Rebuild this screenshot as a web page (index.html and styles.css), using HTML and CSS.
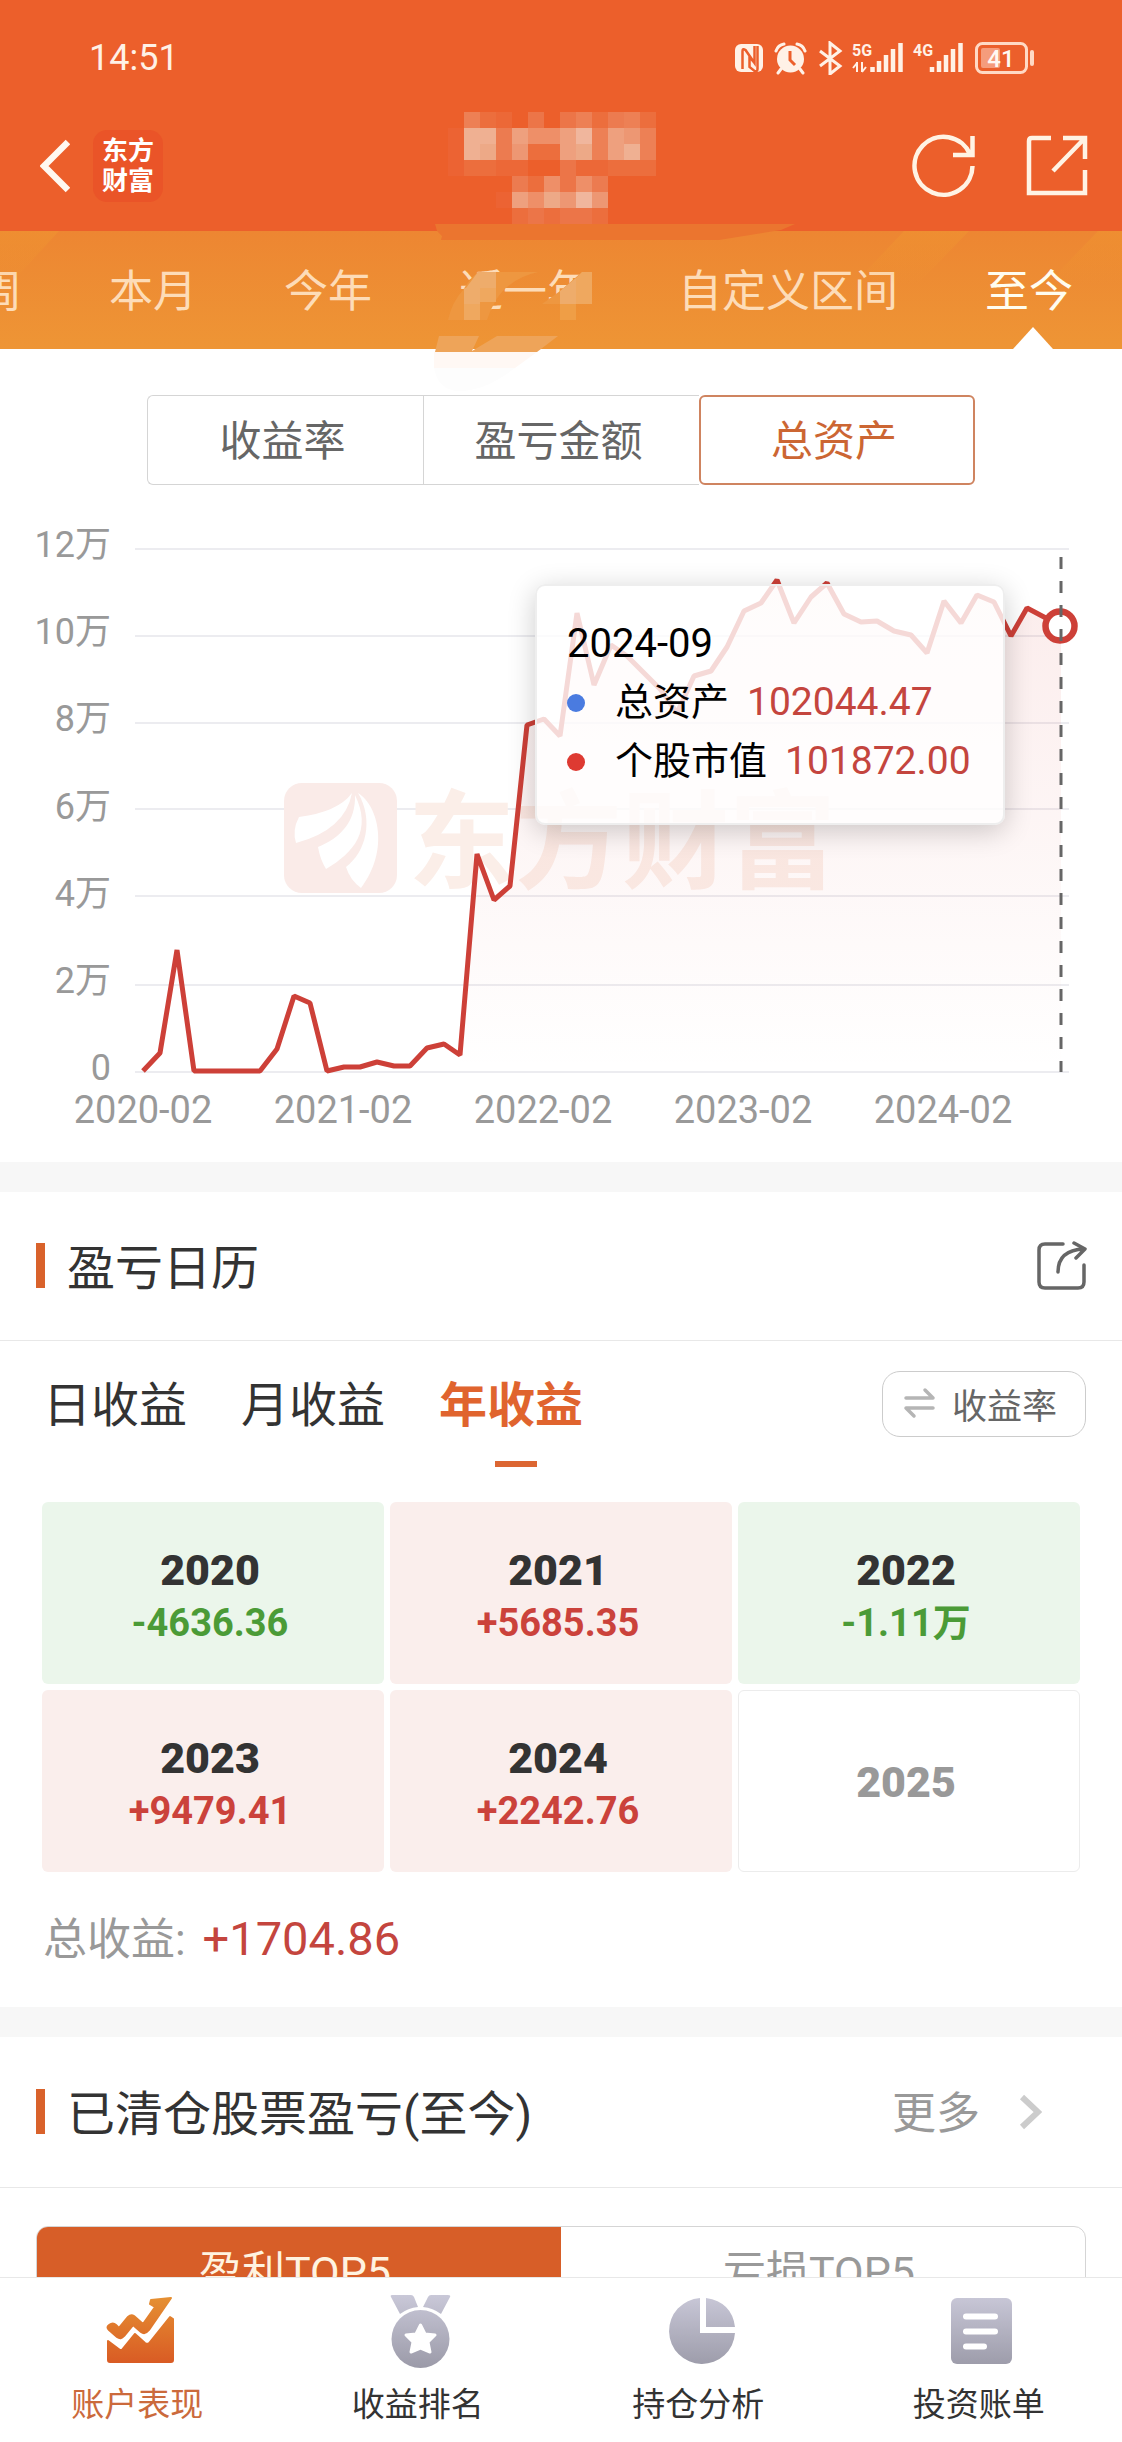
FILE: index.html
```html
<!DOCTYPE html>
<html lang="zh-CN">
<head>
<meta charset="utf-8">
<meta name="viewport" content="width=device-width, initial-scale=1">
<title>账户表现</title>
<link rel="stylesheet" href="styles.css">
</head>
<body>
<div class="app">
  <header class="top">
    <div class="status">
      <span class="clock">14:51</span>
      <svg class="status-icons" viewBox="735 41 300 34" aria-hidden="true">
        <rect x="735" y="44" width="28" height="28" rx="6" fill="#fff1e6"/>
        <path d="M742.500 69V51q0-3 3-1l9 13V46M754.500 63l-5-6v10l5 4q3 1 3-2V46" fill="none" stroke="#ec5f2b" stroke-width="2.500"/>
        <circle cx="790.500" cy="59" r="13.500" fill="#fff1e6"/>
        <path d="M776 51q2-6 8-7M805 51q-2-6-8-7M781 69l-3 4M800 69l3 4" stroke="#fff1e6" stroke-width="3" fill="none" stroke-linecap="round"/>
        <path d="M790 51v9l5 5" fill="none" stroke="#ec5f2b" stroke-width="3"/>
        <path d="M820 51l20 15-10 8V43l10 8-20 15" fill="none" stroke="#fff1e6" stroke-width="3"/>
        <text x="852" y="56" class="net">5G</text>
        <path d="M857 62v10M853 68l4-5M862 62v10M866 67l-4 5" stroke="#fff1e6" stroke-width="2" fill="none"/>
        <path d="M872.500 72v-5M879 72V61M886 72V55M893 72V49M900.500 72V43" stroke="#fff1e6" stroke-width="4.500"/>
        <text x="913" y="56" class="net">4G</text>
        <path d="M932 72v-5M939 72V61M946 72V55M953 72V49M960.500 72V43" stroke="#fff1e6" stroke-width="4.500"/>
        <rect x="976.500" y="43.500" width="50" height="29" rx="6" fill="none" stroke="#ffd9c4" stroke-width="3"/>
        <rect x="981" y="48" width="19" height="20" rx="2" fill="#f59c7c"/>
        <rect x="1030" y="50" width="4" height="16" rx="2" fill="#ffd9c4"/>
        <text x="1001" y="67" class="charge">41</text>
      </svg>
    </div>
    <div class="nav">
      <button class="icon-btn" aria-label="返回">
        <svg width="30" height="54" viewBox="40 139 30 54"><path d="M68 142L44 166l24 24" fill="none" stroke="#fff8f0" stroke-width="6.500"/></svg>
      </button>
      <a class="logo" href="#">东方<br>财富</a>
      <span class="spacer"></span>
      <button class="icon-btn refresh" aria-label="刷新">
        <svg width="64" height="64" viewBox="912 133 64 64"><path d="M972.500 165A29 29 0 1 1 970 153M972.500 135v19H953" fill="none" stroke="#fff3e4" stroke-width="4.500"/></svg>
      </button>
      <button class="icon-btn" aria-label="分享">
        <svg width="62" height="62" viewBox="1026 135 62 62"><path d="M1051 138h-19q-3 0-3 3v52h56v-23M1063 138h22v21M1084 139l-31 32" fill="none" stroke="#fff3e4" stroke-width="4.500"/></svg>
      </button>
    </div>
    <nav class="periods">
      <button>本周</button>
      <button>本月</button>
      <button>今年</button>
      <button>近一年</button>
      <button>自定义区间</button>
      <button class="on">至今</button>
    </nav>
    <svg class="mask" viewBox="0 0 1122 400" aria-hidden="true">
      <defs><linearGradient id="ray" x1="0" y1="0" x2="0" y2="1"><stop offset="0" stop-color="#f09a30" stop-opacity=".4"/><stop offset="1" stop-color="#f09a30" stop-opacity="0"/></linearGradient></defs>
      <path fill="url(#ray)" d="M0 231h59l-44 48H0zM904 231h65l-52 54h-64zM1098 231h24v54h-76z"/>
      <path fill="#ec6333" d="M448 128h16v48h-16zM496 192h16v16h-16z"/>
      <path fill="#ed8055" d="M464 112h16v16h-16zM576 112h16v16h-16zM624 112h16v16h-16zM592 128h16v32h-16zM640 128h16v32h-16z"/>
      <path fill="#ec6e3d" d="M480 112h16v16h-16zM640 112h16v16h-16zM592 112h16v16h-16zM528 144h32v16h-32zM464 160h32v16h-32zM608 160h48v16h-48zM528 176h16v16h-16zM512 208h16v16h-16zM544 208h16v16h-16zM592 208h16v16h-16z"/>
      <path fill="#ec6837" d="M496 112h16v16h-16zM496 160h32v16h-32zM576 160h32v16h-32z"/>
      <path fill="#ec7548" d="M528 112h16v16h-16zM560 112h16v16h-16zM560 160h16v16h-16zM560 176h16v16h-16zM528 208h16v16h-16zM560 208h32v16h-32z"/>
      <path fill="#ec7b50" d="M608 112h16v16h-16zM496 128h16v32h-16zM512 176h16v16h-16zM592 176h16v16h-16z"/>
      <path fill="#efb092" d="M464 128h32v16h-32zM464 144h16v16h-16zM624 144h16v16h-16z"/>
      <path fill="#eea07e" d="M512 128h16v16h-16zM560 128h16v32h-16zM608 128h16v32h-16zM512 192h16v16h-16z"/>
      <path fill="#ee8f68" d="M528 128h32v16h-32zM544 176h16v16h-16zM576 176h16v16h-16zM528 192h16v16h-16z"/>
      <path fill="#ed9773" d="M624 128h16v16h-16zM512 144h16v16h-16zM560 192h16v16h-16zM592 192h16v16h-16z"/>
      <path fill="#eda987" d="M480 144h16v16h-16zM576 144h16v16h-16zM544 192h16v16h-16z"/>
      <path fill="#f0b69d" d="M576 128h16v16h-16zM576 192h16v16h-16z"/>
      <path fill="#eb752f" d="M435 224h360l-14 6-62 10H441l1-4-5-5z"/>
      <path fill="#ee9740" d="M478 272h60q-28 6-42 28-6 10-9 20h-39q4-18 15-30 6-10 15-18zM582 272h10v32h-50l18-13z"/>
      <path fill="#eeac6b" d="M472 280l6-8h18v16h-30zM464 288h16v16h-16zM560 291l16-13v26h-16z"/>
      <path fill="#efa85f" d="M480 288h16v14h-16zM464 304h16v16h-16zM582 272h10v32h-16v-26z"/>
      <path fill="#ef9e46" d="M560 304h16v16h-16z"/>
      <path fill="#eea459" d="M439 336h40l-7 15 25-15h61l-21 16H435z"/>
      <path fill="#fff8f4" d="M434 352h103l-22 16h-81z"/>
      <path fill="#fdfdfd" d="M434 368h81q-30 23-55 23-22 0-26-23z"/>
    </svg>
  </header>

  <main class="content">
    <section class="assets">
      <div class="segment">
        <button>收益率</button>
        <button>盈亏金额</button>
        <button class="on">总资产</button>
      </div>
      <div class="chart">
        <svg viewBox="0 485 1122 677" role="img" aria-label="总资产走势">
          <defs>
            <linearGradient id="fill" x1="0" y1="0" x2="0" y2="1"><stop offset="0" stop-color="#d9403a" stop-opacity=".1"/><stop offset="1" stop-color="#d9403a" stop-opacity="0"/></linearGradient>
          </defs>
          <g stroke="#ececf0" stroke-width="2">
            <path d="M135 549h934M135 636h934M135 723h934M135 809h934M135 896h934M135 985h934M135 1072h934"/>
          </g>
          <g>
            <rect x="284" y="783" width="113" height="110" rx="18" fill="#faebe8"/>
            <path fill="#fff" d="M352 793Q338 812 299 817Q292 830 296 843Q345 830 352 793zM355 795C356 822 340 838 318 847Q320 859 326 869C355 852 372 830 355 795zM358 793C378 805 390 850 361 888Q350 880 346 867C366 852 374 820 358 793z"/>
            <text x="408" y="880" class="watermark">东方财富</text>
          </g>
          <path fill="url(#fill)" d="M460 1072L460 1055L477 854L494 900L510 886L527 725L544 719L560 736L577 613L594 685L611 645L627 656L644 673L661 690L677 713L694 676L711 671L727 647L744 611L761 603L777 580L794 623L811 597L827 583L844 614L861 622L877 621L894 631L911 635L927 653L944 601L961 623L977 595L994 602L1011 636L1027 608L1044 617L1061 626V1072z"/>
          <path fill="none" stroke="#cd4038" stroke-width="5" stroke-linejoin="bevel" d="M143 1071L160 1053L177 950L194 1071H260L277 1049L294 996L310 1003L327 1071L344 1067H360L377 1062L394 1066H410L427 1048L444 1044L460 1055L477 854L494 900L510 886L527 725L544 719L560 736L577 613L594 685L611 645L627 656L644 673L661 690L677 713L694 676L711 671L727 647L744 611L761 603L777 580L794 623L811 597L827 583L844 614L861 622L877 621L894 631L911 635L927 653L944 601L961 623L977 595L994 602L1011 636L1027 608L1044 617L1061 626"/>
          <circle cx="1060" cy="626" r="14.500" fill="#fff" stroke="#cd4038" stroke-width="6.500"/>
          <path d="M1061 557v515" stroke="#666" stroke-width="3" stroke-dasharray="12 12"/>
          <g class="axis" text-anchor="end">
            <text x="111" y="557">12万</text>
            <text x="111" y="644">10万</text>
            <text x="111" y="731">8万</text>
            <text x="111" y="819">6万</text>
            <text x="111" y="906">4万</text>
            <text x="111" y="993">2万</text>
            <text x="111" y="1080">0</text>
          </g>
          <g class="axis months" text-anchor="middle">
            <text x="143" y="1123">2020-02</text>
            <text x="343" y="1123">2021-02</text>
            <text x="543" y="1123">2022-02</text>
            <text x="743" y="1123">2023-02</text>
            <text x="943" y="1123">2024-02</text>
          </g>
        </svg>
        <div class="tip">
          <p class="tip-date">2024-09</p>
          <p class="tip-row"><i class="dot blue"></i><span>总资产</span><b>102044.47</b></p>
          <p class="tip-row"><i class="dot red"></i><span>个股市值</span><b>101872.00</b></p>
        </div>
      </div>
    </section>

    <section class="calendar">
      <div class="head">
        <h2>盈亏日历</h2>
        <button class="icon-btn" aria-label="分享日历">
          <svg width="50" height="50" viewBox="1037 1240 50 50"><path d="M1063 1243h-18q-6 0-6 6v32q0 6 6 6h33q6 0 6-6v-17M1058 1271q0-22 26-23M1074 1242l11 6-9 9" fill="none" stroke="#666" stroke-width="3.500" stroke-linecap="round" stroke-linejoin="round"/></svg>
        </button>
      </div>
      <div class="modes">
        <button>日收益</button>
        <button>月收益</button>
        <button class="on">年收益</button>
        <span class="spacer"></span>
        <button class="switch">
          <svg width="32" height="32" viewBox="902 1387 32 32"><path d="M904 1398h27l-8-8M931 1408h-27l8 8" fill="none" stroke="#b5b5b5" stroke-width="3.500" stroke-linecap="round" stroke-linejoin="round"/></svg><span>收益率</span>
        </button>
      </div>
      <ul class="years">
        <li class="down"><strong>2020</strong><span>-4636.36</span></li>
        <li class="up"><strong>2021</strong><span>+5685.35</span></li>
        <li class="down"><strong>2022</strong><span>-1.11万</span></li>
        <li class="up"><strong>2023</strong><span>+9479.41</span></li>
        <li class="up"><strong>2024</strong><span>+2242.76</span></li>
        <li class="none"><strong>2025</strong></li>
      </ul>
      <p class="total">总收益: <b>+1704.86</b></p>
    </section>

    <section class="closed">
      <div class="head">
        <h2>已清仓股票盈亏(至今)</h2>
        <a class="more" href="#"><span>更多</span>
          <svg width="24" height="36" viewBox="1018 2091 24 36"><path d="M1022 2094l16 15-16 15" fill="none" stroke="#ccc" stroke-width="6"/></svg>
        </a>
      </div>
      <div class="top5">
        <button class="on">盈利TOP5</button>
        <button>亏损TOP5</button>
      </div>
    </section>
  </main>

  <nav class="tabbar">
    <a class="on" href="#">
      <svg width="73" height="73" viewBox="104 2295 73 73" aria-hidden="true">
        <defs><linearGradient id="warm" gradientUnits="userSpaceOnUse" x1="0" y1="2298" x2="0" y2="2363"><stop offset="0" stop-color="#e58f32"/><stop offset="1" stop-color="#d95b24"/></linearGradient></defs>
        <path fill="url(#warm)" stroke="url(#warm)" stroke-width="2" stroke-linejoin="round" d="M109 2325q4-3 7 0l3 3 9-11q3-3 6-1l9 8 12-17-5-3 1-4 20-2-22 32q-4 5-8 2l-8-7-9 11q-3 4-7 1l-8-7q-3-3 0-5zM108 2341l12 9 2 0 13-16 10 9q3 2 5-1l20-25 3 2v41q0 2-2 2h-61q-2 0-2-2z"/>
      </svg>
      <span>账户表现</span>
    </a>
    <a href="#">
      <svg width="73" height="73" viewBox="386 2295 73 73" aria-hidden="true">
        <defs><linearGradient id="cool" gradientUnits="userSpaceOnUse" x1="0" y1="2295" x2="0" y2="2368"><stop offset="0" stop-color="#c9c8d8"/><stop offset="1" stop-color="#9b9aa8"/></linearGradient></defs>
        <path fill="url(#cool)" d="M394 2295h19q2 0 3 2l4 10q-10 1-18 7l-9-17q-1-2 1-2zM450 2295h-17q-2 0-3 2l-5 10q10 1 18 7l9-17q1-2-2-2z"/>
        <circle cx="422.500" cy="2339" r="29" fill="url(#cool)"/>
        <path fill="#fff" stroke="#fff" stroke-width="3" stroke-linejoin="round" d="M422.500 2325l4.500 9 10 1-7 7 2 10-9.500-4-9.500 4 2-10-7-7 10-1z"/>
      </svg>
      <span>收益排名</span>
    </a>
    <a href="#">
      <svg width="73" height="73" viewBox="665 2295 73 73" aria-hidden="true">
        <path fill="url(#cool)" d="M700 2298v35h35a33 33 0 1 1-35-35zM706 2298q26 4 29 29h-29z"/>
      </svg>
      <span>持仓分析</span>
    </a>
    <a href="#">
      <svg width="73" height="73" viewBox="946 2295 73 73" aria-hidden="true">
        <rect x="952" y="2298" width="61" height="66" rx="6" fill="url(#cool)"/>
        <path d="M967 2316.500h29M967 2331.500h29M967 2346.500h18" stroke="#fff" stroke-width="6" stroke-linecap="round"/>
      </svg>
      <span>投资账单</span>
    </a>
  </nav>
</div>
</body>
</html>
```

FILE: styles.css
```css
* { box-sizing: border-box; margin: 0; padding: 0; }

body {
  font-family: Roboto, "Noto Sans CJK SC", sans-serif;
  color: #333;
  background: #fff;
}

button {
  font: inherit;
  color: inherit;
  background: none;
  border: 0;
  cursor: pointer;
}

a { color: inherit; text-decoration: none; }
svg { display: block; }
b, i { font-weight: 400; font-style: normal; }
.spacer { flex: 1; }
.icon-btn { flex: none; }

.app {
  display: flex;
  flex-direction: column;
  height: 100vh;
}

/* header */
.top {
  position: relative;
  flex: none;
  background: #ec5f2b;
}

.status {
  display: flex;
  align-items: center;
  justify-content: space-between;
  height: 100px;
  padding: 16px 87px 0 89px;
}

.clock { font-size: 36px; line-height: 42px; color: #fff1e6; }
.status-icons { width: 300px; height: 34px; }
.net { font-size: 16px; font-weight: 700; fill: #fff1e6; }
.charge { font-size: 24px; font-weight: 500; fill: #fff8f2; text-anchor: middle; }

.nav {
  display: flex;
  align-items: center;
  height: 131px;
  padding: 0 34px 0 40px;
}

.logo {
  display: flex;
  align-items: center;
  margin-left: 23px;
  padding: 6px 9px;
  border-radius: 14px;
  background: #ea5428;
  color: #fff;
  font-size: 26px;
  font-weight: 700;
  line-height: 30px;
}

.refresh { margin-right: 50px; }

.periods {
  display: flex;
  justify-content: flex-end;
  gap: 87px;
  height: 118px;
  padding-right: 49px;
  overflow: hidden;
  background: linear-gradient(#ed8632, #ee9535);
  color: #fddcb8;
  font-size: 44px;
}

.periods button { position: relative; flex: none; padding-bottom: 4px; white-space: nowrap; }
.periods .on { color: #fffdf0; }
.periods .on::after {
  content: "";
  position: absolute;
  left: 50%;
  bottom: 0;
  margin-left: -16px;
  border: 20px solid transparent;
  border-top: 0;
  border-bottom: 22px solid #fff;
}

.mask {
  position: absolute;
  top: 0;
  left: 0;
  width: 100%;
  pointer-events: none;
}

/* body */
.content {
  flex: 1;
  min-height: 0;
  overflow-y: auto;
  scrollbar-width: none;
}

.content section + section { border-top: 30px solid #f7f7f7; }

.segment {
  display: grid;
  grid-template-columns: repeat(3, 1fr);
  height: 136px;
  padding: 46px 147px 0;
  color: #666;
  font-size: 42px;
}

.segment button { padding: 0 6px 6px 0; border: 1px solid #d5d5d5; border-right: 0; }
.segment button:first-child { border-radius: 6px 0 0 6px; }
.segment .on { border: 2px solid #cf8460; border-radius: 6px; color: #cc6633; }

.chart { position: relative; }
.chart > svg { width: 100%; height: auto; }
.axis { font-size: 36px; fill: #999; }
.months { font-size: 38px; }
.watermark { font-size: 107px; font-weight: 700; fill: #fbeee8; }

.tip {
  position: absolute;
  top: 99px;
  right: 117px;
  width: 470px;
  padding: 28px 0 32px 30px;
  border: 2px solid #eee;
  border-radius: 10px;
  background: rgba(255, 255, 255, .8);
  box-shadow: 0 6px 28px rgba(0, 0, 0, .2);
  color: #000;
  font-size: 38px;
  line-height: 59px;
}

.tip-date { font-size: 40px; }
.tip-row { display: flex; align-items: center; white-space: nowrap; }
.tip-row b { margin-left: 18px; color: #c4453e; font-size: 39px; }
.dot { width: 18px; height: 18px; margin-right: 30px; border-radius: 50%; }
.blue { background: #4a7be0; }
.red { background: #de3a32; }

.head {
  display: flex;
  align-items: center;
  justify-content: space-between;
  height: 149px;
  padding: 0 35px 0 36px;
  border-bottom: 1px solid #e8e8e8;
}

.head h2 {
  display: flex;
  align-items: center;
  gap: 22px;
  padding-bottom: 5px;
  font-size: 48px;
  font-weight: 400;
}

.head h2::before {
  content: "";
  width: 9px;
  height: 45px;
  margin-top: 4px;
  background: #d9622b;
}

.modes {
  display: flex;
  align-items: center;
  gap: 54px;
  height: 126px;
  padding: 0 36px 0 43px;
  font-size: 48px;
}

.modes > button { flex: none; padding-bottom: 6px; white-space: nowrap; }
.modes .on { position: relative; color: #e0642e; font-weight: 700; }
.modes .on::after {
  content: "";
  position: absolute;
  left: 50%;
  bottom: -25px;
  width: 42px;
  height: 6px;
  margin-left: -16px;
  background: #dc6632;
}

.modes .switch {
  display: flex;
  align-items: center;
  gap: 16px;
  height: 66px;
  padding: 0 28px 2px 21px;
  border: 1px solid #ccc;
  border-radius: 18px;
  color: #666;
  font-size: 35px;
}

.years {
  display: grid;
  grid-template-columns: repeat(3, 1fr);
  grid-auto-rows: 182px;
  gap: 6px;
  padding: 35px 42px 0;
  list-style: none;
}

.years li {
  display: flex;
  flex-direction: column;
  align-items: center;
  justify-content: center;
  padding: 2px 6px 0 0;
  border-radius: 6px;
  font-weight: 700;
}

.years strong { font-size: 43px; line-height: 58px; }
.years span { font-size: 38px; line-height: 48px; }
.up { background: #faeeec; }
.up span { color: #cb423b; }
.down { background: #ebf6eb; }
.down span { color: #4b9b37; }
.none { border: 1px solid #ececec; color: #999; }

.total {
  padding: 36px 43px;
  color: #999;
  font-size: 44px;
  line-height: 61px;
}

.total b { margin-left: 6px; color: #c4453e; font-size: 47px; }

.closed .head { height: 151px; padding-right: 80px; }
.more { display: flex; align-items: center; gap: 38px; color: #999; font-size: 44px; }
.more span { padding-bottom: 4px; }

.top5 {
  display: grid;
  grid-template-columns: 1fr 1fr;
  height: 90px;
  margin: 38px 36px;
  overflow: hidden;
  border: 1px solid #d5d5d5;
  border-radius: 12px;
  color: #999;
  font-size: 43px;
}

.top5 button { padding: 0 8px 6px 0; }
.top5 .on { background: #d75e28; color: #fff3e0; }

/* bottom bar */
.tabbar {
  display: grid;
  grid-template-columns: repeat(4, 1fr);
  flex: none;
  height: 165px;
  border-top: 1px solid #e8e8e8;
  background: #fff;
}

.tabbar a {
  display: flex;
  flex-direction: column;
  align-items: center;
  gap: 17px;
  padding-top: 17px;
  font-size: 33px;
  line-height: 40px;
}

.tabbar span { padding-right: 6px; }
.tabbar .on { color: #cb6a3c; }
```
